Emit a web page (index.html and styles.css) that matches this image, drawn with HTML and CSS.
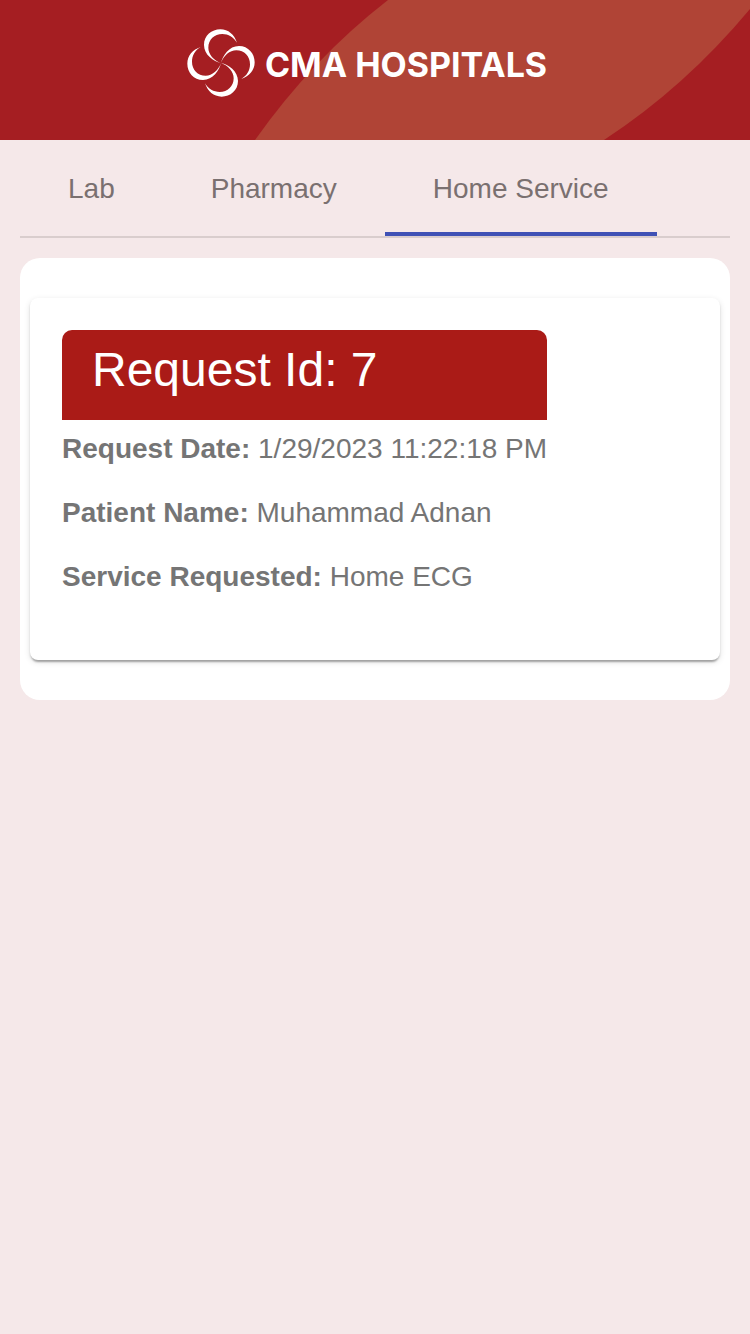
FILE: index.html
```html
<!DOCTYPE html>
<html lang="en">
<head>
<meta charset="utf-8">
<meta name="viewport" content="width=device-width, initial-scale=1">
<title>CMA Hospitals</title>
<link rel="stylesheet" href="styles.css">
</head>
<body>
<header class="banner">
  <svg class="banner-art" viewBox="0 0 750 140" preserveAspectRatio="none" aria-hidden="true">
    <path d="M388 0H750V9Q685 87 604 140H255Q313 58 388 0Z" fill="#b04436"/>
  </svg>
  <div class="brand">
    <svg class="brand-mark" viewBox="-102 -102 204 204" fill="#fff" aria-hidden="true">
      <defs>
        <path id="arm" d="M0 0C-22 -5 -51 -24 -51 -54C-51 -82 -28 -101 -2 -101C22 -101 40 -85 48 -61C38 -78 22 -87 4 -87C-20 -87 -38 -70 -38 -46C-38 -26 -22 -8 0 0Z"/>
      </defs>
      <use href="#arm"/>
      <use href="#arm" transform="rotate(90)"/>
      <use href="#arm" transform="rotate(180)"/>
      <use href="#arm" transform="rotate(270)"/>
    </svg>
    <span class="brand-name">CMA HOSPITALS</span>
  </div>
</header>
<main class="content">
  <div class="tabs" role="tablist">
    <button class="tab" type="button" role="tab" aria-selected="false">Lab</button>
    <button class="tab" type="button" role="tab" aria-selected="false">Pharmacy</button>
    <button class="tab tab-active" type="button" role="tab" aria-selected="true">Home Service</button>
  </div>
  <section class="panel" role="tabpanel" aria-label="Home Service">
    <article class="card">
      <div class="request">
        <h1 class="request-title">Request Id: 7</h1>
        <p class="field"><b>Request Date:</b> 1/29/2023 11:22:18 PM</p>
        <p class="field"><b>Patient Name:</b> Muhammad Adnan</p>
        <p class="field"><b>Service Requested:</b> Home ECG</p>
      </div>
    </article>
  </section>
</main>
</body>
</html>
```
FILE: styles.css
```css
* {
  box-sizing: border-box;
}

body {
  margin: 0;
  min-height: 100vh;
  background: #f5e8e9;
  color: #757575;
  font-family: "Liberation Sans", Arial, sans-serif;
  font-size: 28px;
  line-height: 42px;
}

.banner {
  position: relative;
  padding: 29px 16px 43px 0;
  background: #a51e22;
}

.banner-art {
  position: absolute;
  inset: 0;
  width: 100%;
  height: 100%;
}

.brand {
  position: relative;
  display: flex;
  align-items: center;
  justify-content: center;
  gap: 10px;
}

.brand-mark {
  width: 68px;
  height: 68px;
}

.brand-name {
  padding-top: 3px;
  color: #fff;
  font-family: Inter, sans-serif;
  font-size: 34px;
  font-weight: 700;
}

.content {
  padding: 0 20px 20px;
}

.tabs {
  display: flex;
  margin-bottom: 20px;
  border-bottom: 2px solid #d9cdcd;
}

.tab {
  height: 96px;
  padding: 6px 48px 0;
  border: 0;
  border-bottom: 4px solid transparent;
  background: none;
  color: #7a7070;
  font: inherit;
  white-space: nowrap;
  cursor: pointer;
}

.tab-active {
  border-bottom-color: #3f51b5;
}

.panel {
  padding: 40px 10px;
  border-radius: 20px;
  background: #fff;
}

.card {
  padding: 32px 32px 62px;
  border-radius: 8px;
  background: #fff;
  box-shadow: 0 4px 2px -2px rgba(0, 0, 0, 0.2), 0 2px 2px rgba(0, 0, 0, 0.14), 0 2px 6px rgba(0, 0, 0, 0.12);
}

.request {
  width: fit-content;
}

.request-title {
  margin: 0 0 8px;
  padding: 0 30px 10px;
  border-radius: 10px 10px 0 0;
  background: #aa1b17;
  color: #fff;
  font-size: 48px;
  font-weight: 400;
  line-height: 80px;
}

.field {
  margin: 0 0 22px;
}

.field:last-child {
  margin-bottom: 0;
}
```
